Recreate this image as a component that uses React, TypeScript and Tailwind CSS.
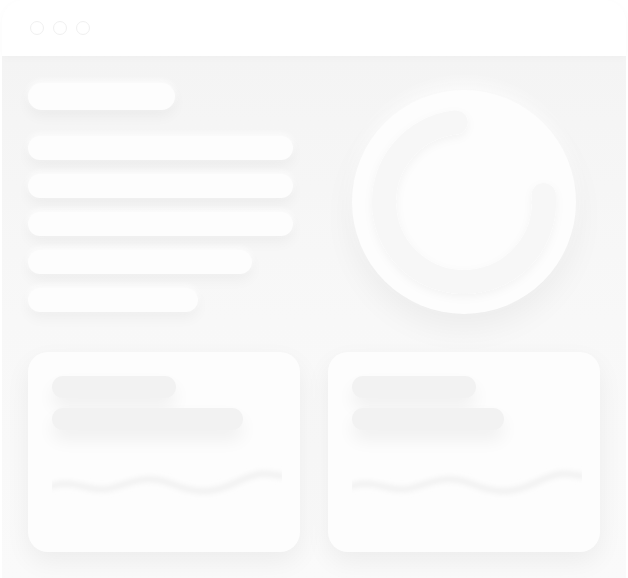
import React from "react";

function Bar({ w, h = 24, tone = "light" }: { w: number; h?: number; tone?: "light" | "gray" }) {
  return (
    <div
      className={
        tone === "light"
          ? "rounded-full bg-[#fdfdfd] shadow-[0_6px_14px_rgba(0,0,0,0.045),0_-2px_6px_rgba(255,255,255,0.9)]"
          : "rounded-full bg-[#f2f2f2] shadow-[0_10px_18px_rgba(0,0,0,0.055)]"
      }
      style={{ width: w, height: h }}
    />
  );
}

function Card({ w2 }: { w2: number }) {
  return (
    <div className="relative h-[200px] rounded-[20px] bg-[#fdfdfd] shadow-[0_10px_26px_rgba(0,0,0,0.055)] px-6 pt-6">
      <div className="flex flex-col gap-[10px]">
        <Bar w={124} h={22} tone="gray" />
        <Bar w={w2} h={22} tone="gray" />
      </div>
      <svg className="absolute left-6 top-[108px]" width="230" height="48" viewBox="0 0 230 48">
        <defs>
          <filter id={`blur${w2}`} x="-10%" y="-50%" width="120%" height="200%">
            <feGaussianBlur stdDeviation="2.5" />
          </filter>
        </defs>
        <path
          d="M0 26 C 20 18, 40 34, 60 28 S 95 14, 120 24 S 160 34, 185 22 S 215 14, 230 16"
          fill="none"
          stroke="#f1f1f1"
          strokeWidth="6"
          strokeLinecap="round"
          filter={`url(#blur${w2})`}
        />
      </svg>
    </div>
  );
}

export default function App() {
  const cx = 112;
  const cy = 112;
  const r = 80;
  const a0 = (-96 * Math.PI) / 180;
  const a1 = (-5 * Math.PI) / 180;
  const x0 = cx + r * Math.cos(a0);
  const y0 = cy + r * Math.sin(a0);
  const x1 = cx + r * Math.cos(a1);
  const y1 = cy + r * Math.sin(a1);
  const arc = `M ${x0} ${y0} A ${r} ${r} 0 1 0 ${x1} ${y1}`;

  return (
    <div className="w-[628px] h-[578px] bg-white overflow-hidden" style={{ fontFamily: "Inter, sans-serif" }}>
      <div className="ml-[2px] w-[624px] h-full flex flex-col">
        <div className="h-14 rounded-t-[22px] bg-white shadow-[0_2px_8px_rgba(0,0,0,0.025)] flex items-center gap-[9px] pl-[28px] relative z-10">
          <div className="w-[14px] h-[14px] rounded-full border border-[#f0f0f0] bg-white" />
          <div className="w-[14px] h-[14px] rounded-full border border-[#f0f0f0] bg-white" />
          <div className="w-[14px] h-[14px] rounded-full border border-[#f0f0f0] bg-white" />
        </div>
        <div className="flex-1 bg-gradient-to-b from-[#f4f4f4] via-[#f8f8f8] to-[#fafafa] px-[26px] pt-[27px]">
          <div className="flex">
            <div className="flex flex-col">
              <Bar w={147} h={27} />
              <div className="mt-[26px] flex flex-col gap-[14px]">
                <Bar w={265} />
                <Bar w={265} />
                <Bar w={265} />
                <Bar w={224} />
                <Bar w={170} />
              </div>
            </div>
            <div className="ml-[59px] mt-[7px] w-[224px] h-[224px] rounded-full bg-[#fdfdfd] shadow-[0_14px_32px_rgba(0,0,0,0.05),0_-6px_16px_rgba(255,255,255,0.8)] flex items-center justify-center">
              <svg width="224" height="224" viewBox="0 0 224 224">
                <defs>
                  <filter id="ringShadow" x="-20%" y="-20%" width="140%" height="140%">
                    <feDropShadow dx="0" dy="3" stdDeviation="4" floodColor="#000" floodOpacity="0.04" />
                  </filter>
                </defs>
                <path d={arc} fill="none" stroke="#f7f7f7" strokeWidth="24" strokeLinecap="round" filter="url(#ringShadow)" />
              </svg>
            </div>
          </div>
          <div className="mt-[38px] grid grid-cols-2 gap-[28px]">
            <Card w2={191} />
            <Card w2={152} />
          </div>
        </div>
      </div>
    </div>
  );
}
